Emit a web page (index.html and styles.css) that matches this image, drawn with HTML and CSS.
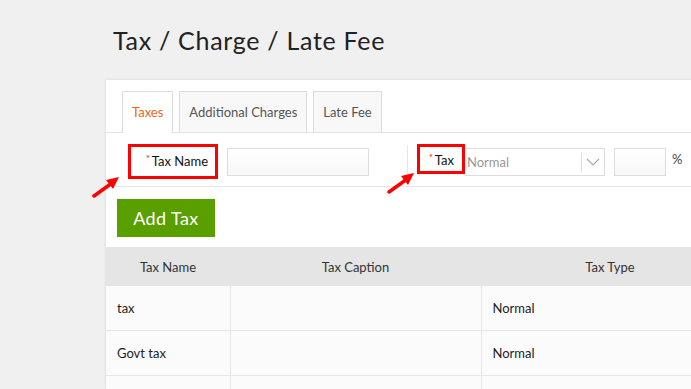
FILE: index.html
```html
<!DOCTYPE html>
<html lang="en">
<head>
  <meta charset="UTF-8">
  <title>Tax / Charge / Late Fee</title>
  <link rel="stylesheet" href="styles.css">
</head>
<body>
  <h1 class="page-title">Tax / Charge / Late Fee</h1>

  <div class="panel">
    <ul class="tabs">
      <li class="tab active">Taxes</li>
      <li class="tab">Additional Charges</li>
      <li class="tab">Late Fee</li>
    </ul>

    <form class="tax-form" autocomplete="off">
      <label class="field-label mark wide"><span class="req">*</span>Tax Name</label>
      <input type="text" class="text-input name-input">
      <span class="divider"></span>
      <label class="field-label mark short"><span class="req">*</span>Tax</label>
      <div class="select-box">
        <span class="select-value">Normal</span>
        <span class="select-arrow">
          <svg width="14" height="8" viewBox="0 0 14 8"><path d="M1 1l6 6 6-6" fill="none" stroke="#aaa" stroke-width="1.2"/></svg>
        </span>
      </div>
      <input type="text" class="text-input rate-input">
      <span class="percent">%</span>

      <!-- anotações em vermelho -->
      <svg class="arrow arrow-one" width="30" height="24" viewBox="0 0 30 24">
        <path d="M2 22L20 9" stroke="#f00" stroke-width="3.5" stroke-linecap="round"/>
        <path d="M27 3L14 6l7 9z" fill="#f00"/>
      </svg>
      <svg class="arrow arrow-two" width="30" height="24" viewBox="0 0 30 24">
        <path d="M2 22L20 9" stroke="#f00" stroke-width="3.5" stroke-linecap="round"/>
        <path d="M27 3L14 6l7 9z" fill="#f00"/>
      </svg>
    </form>

    <div class="actions">
      <button type="button" class="btn-add">Add Tax</button>
    </div>

    <div class="table-wrap">
      <table class="tax-table">
        <thead>
          <tr>
            <th class="col-name">Tax Name</th>
            <th class="col-caption">Tax Caption</th>
            <th class="col-type">Tax Type</th>
            <th></th>
          </tr>
        </thead>
        <tbody>
          <tr><td>tax</td><td></td><td>Normal</td><td></td></tr>
          <tr><td>Govt tax</td><td></td><td>Normal</td><td></td></tr>
          <tr><td></td><td></td><td></td><td></td></tr>
        </tbody>
      </table>
    </div>
  </div>
</body>
</html>
```

FILE: styles.css
```css
body {
  margin: 0;
  background: #f0f0f0;
  font-family: 'Lato', 'Open Sans', sans-serif;
  color: #333;
  overflow: hidden;
  height: 389px;
}
.page-title {
  margin: 0;
  padding: 25px 0 0 113px;
  height: 80px;
  box-sizing: border-box;
  font-size: 25px;
  line-height: 30px;
  font-weight: 400;
  letter-spacing: 0.7px;
  color: #222;
}
.panel {
  margin-left: 106px;
  height: 309px;
  box-sizing: border-box;
  background: #fff;
  box-shadow: 0 0 3px #d5d5d5;
  padding-top: 11px;
}
.tabs {
  list-style: none;
  margin: 0;
  padding: 0 0 0 16px;
  display: flex;
  gap: 6px;
  border-bottom: 1px solid #e2e2e2;
  height: 41px;
}
.tab {
  height: 41px;
  box-sizing: border-box;
  padding: 0 9px;
  border: 1px solid #ddd;
  border-bottom: none;
  background: #f8f8f8;
  color: #555;
  font-size: 13px;
  line-height: 40px;
}
.tab.active {
  background: #fff;
  color: #e8690f;
  height: 42px;
}
.tax-form {
  position: relative;
  display: flex;
  align-items: flex-start;
  height: 54px;
  border-bottom: 1px solid #e5e5e5;
  padding-left: 22px;
  box-sizing: border-box;
}
.field-label {
  font-size: 13px;
  color: #111;
  box-sizing: border-box;
}
.mark {
  border: 3px solid #f00;
}
.field-label.wide {
  margin-top: 11px;
  width: 90px;
  height: 35px;
  padding: 6px 0 0 15px;
}
.field-label.short {
  margin-top: 11px;
  width: 48px;
  height: 30px;
  padding: 5px 0 0 9px;
}
.req {
  color: #f00;
  font-size: 9px;
  vertical-align: 4px;
  margin-right: 2px;
}
.text-input {
  height: 28px;
  box-sizing: border-box;
  border: 1px solid #ddd;
  background: linear-gradient(#fff, #f7f7f7);
  margin-top: 15px;
  padding: 0 6px;
}
.name-input {
  width: 142px;
  margin-left: 9px;
}
.divider {
  width: 1px;
  height: 35px;
  background: #e5e5e5;
  margin: 12px 9px 0 38px;
}
.select-box {
  margin-top: 15px;
  width: 140px;
  height: 28px;
  box-sizing: border-box;
  border: 1px solid #ddd;
  border-left: none;
  display: flex;
  align-items: center;
}
.select-value {
  flex: 1;
  padding-left: 2px;
  font-size: 13px;
  color: #999;
}
.select-arrow {
  width: 22px;
  height: 19px;
  border-left: 1px solid #ddd;
  display: flex;
  align-items: center;
  justify-content: center;
}
.rate-input {
  width: 52px;
  margin-left: 9px;
}
.percent {
  margin: 18px 0 0 6px;
  font-size: 13px;
  color: #444;
}
.arrow {
  position: absolute;
}
.arrow-one {
  left: -14px;
  top: 41px;
}
.arrow-two {
  left: 281px;
  top: 37px;
}
.actions {
  padding: 12px 0 10px 11px;
}
.btn-add {
  display: block;
  width: 98px;
  height: 38px;
  border: none;
  background: #5a9f00;
  color: #fff;
  font-family: inherit;
  font-size: 18px;
  letter-spacing: 0.4px;
  padding: 0;
}
.table-wrap {
  overflow: hidden;
  height: 142px;
}
.tax-table {
  border-collapse: collapse;
  table-layout: fixed;
  width: 800px;
  font-size: 13px;
}
.tax-table th {
  background: #e5e5e5;
  height: 39px;
  font-weight: 400;
  color: #333;
  padding: 0;
}
.col-name { width: 124px; }
.col-caption { width: 251px; }
.col-type { width: 258px; }
.tax-table td {
  height: 44px;
  background: #fbfbfb;
  border: 1px solid #e6e6e6;
  border-top: none;
  padding: 0 0 0 11px;
  color: #222;
}
.tax-table td:first-child {
  border-left: none;
}
```
